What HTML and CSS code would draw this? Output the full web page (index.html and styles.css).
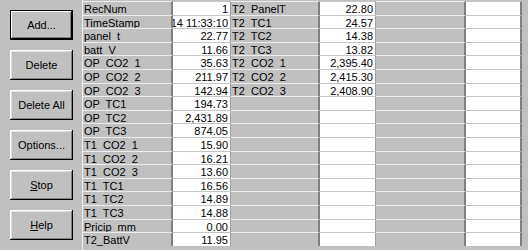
FILE: index.html
```html
<!DOCTYPE html>
<html lang="en">
<head>
    <meta charset="UTF-8">
    <title>Data Table</title>
    <link rel="stylesheet" href="styles.css">
</head>
<body>
    <div class="window">
        <div class="side">
            <button class="btn default">Add...</button>
            <button class="btn">Delete</button>
            <button class="btn">Delete All</button>
            <button class="btn">Options...</button>
            <button class="btn"><u>S</u>top</button>
            <button class="btn"><u>H</u>elp</button>
        </div>

        <div class="grid">
            <div class="row"><div class="cell label">RecNum</div><div class="cell value wide">1</div><div class="cell label">T2  PanelT</div><div class="cell value">22.80</div><div class="cell label"></div><div class="cell value"></div></div>
            <div class="row"><div class="cell label">TimeStamp</div><div class="cell value wide">14 11:33:10</div><div class="cell label">T2  TC1</div><div class="cell value">24.57</div><div class="cell label"></div><div class="cell value"></div></div>
            <div class="row"><div class="cell label">panel  t</div><div class="cell value wide">22.77</div><div class="cell label">T2  TC2</div><div class="cell value">14.38</div><div class="cell label"></div><div class="cell value"></div></div>
            <div class="row"><div class="cell label">batt  V</div><div class="cell value wide">11.66</div><div class="cell label">T2  TC3</div><div class="cell value">13.82</div><div class="cell label"></div><div class="cell value"></div></div>
            <div class="row"><div class="cell label">OP  CO2  1</div><div class="cell value wide">35.63</div><div class="cell label">T2  CO2  1</div><div class="cell value">2,395.40</div><div class="cell label"></div><div class="cell value"></div></div>
            <div class="row"><div class="cell label">OP  CO2  2</div><div class="cell value wide">211.97</div><div class="cell label">T2  CO2  2</div><div class="cell value">2,415.30</div><div class="cell label"></div><div class="cell value"></div></div>
            <div class="row"><div class="cell label">OP  CO2  3</div><div class="cell value wide">142.94</div><div class="cell label">T2  CO2  3</div><div class="cell value">2,408.90</div><div class="cell label"></div><div class="cell value"></div></div>
            <div class="row"><div class="cell label">OP  TC1</div><div class="cell value wide">194.73</div><div class="cell label"></div><div class="cell value"></div><div class="cell label"></div><div class="cell value"></div></div>
            <div class="row"><div class="cell label">OP  TC2</div><div class="cell value wide">2,431.89</div><div class="cell label"></div><div class="cell value"></div><div class="cell label"></div><div class="cell value"></div></div>
            <div class="row"><div class="cell label">OP  TC3</div><div class="cell value wide">874.05</div><div class="cell label"></div><div class="cell value"></div><div class="cell label"></div><div class="cell value"></div></div>
            <div class="row"><div class="cell label">T1  CO2  1</div><div class="cell value wide">15.90</div><div class="cell label"></div><div class="cell value"></div><div class="cell label"></div><div class="cell value"></div></div>
            <div class="row"><div class="cell label">T1  CO2  2</div><div class="cell value wide">16.21</div><div class="cell label"></div><div class="cell value"></div><div class="cell label"></div><div class="cell value"></div></div>
            <div class="row"><div class="cell label">T1  CO2  3</div><div class="cell value wide">13.60</div><div class="cell label"></div><div class="cell value"></div><div class="cell label"></div><div class="cell value"></div></div>
            <div class="row"><div class="cell label">T1  TC1</div><div class="cell value wide">16.56</div><div class="cell label"></div><div class="cell value"></div><div class="cell label"></div><div class="cell value"></div></div>
            <div class="row"><div class="cell label">T1  TC2</div><div class="cell value wide">14.89</div><div class="cell label"></div><div class="cell value"></div><div class="cell label"></div><div class="cell value"></div></div>
            <div class="row"><div class="cell label">T1  TC3</div><div class="cell value wide">14.88</div><div class="cell label"></div><div class="cell value"></div><div class="cell label"></div><div class="cell value"></div></div>
            <div class="row"><div class="cell label">Pricip  mm</div><div class="cell value wide">0.00</div><div class="cell label"></div><div class="cell value"></div><div class="cell label"></div><div class="cell value"></div></div>
            <div class="row"><div class="cell label">T2_BattV</div><div class="cell value wide">11.95</div><div class="cell label"></div><div class="cell value"></div><div class="cell label"></div><div class="cell value"></div></div>
        </div>
    </div>
</body>
</html>
```

FILE: styles.css
```css
body {
    margin: 0;
    padding: 0;
    background: #c0c0c0;
    font-family: 'Liberation Sans', Arial, sans-serif;
    font-size: 11px;
    color: #000;
}

.window {
    display: flex;
    width: 528px;
    height: 250px;
    overflow: hidden;
}

/* button column on the left */
.side {
    width: 82px;
    flex: none;
    display: flex;
    flex-direction: column;
    gap: 10px;
    padding: 10px 0 0 10px;
    box-sizing: border-box;
}

.btn {
    width: 63px;
    height: 30px;
    padding: 0;
    border: none;
    background: #c0c0c0;
    font-family: inherit;
    font-size: 11px;
    color: #000;
    box-shadow: inset -1px -1px #000, inset 1px 1px #fff,
                inset -2px -2px #808080, inset 2px 2px #dfdfdf;
}

.btn.default {
    box-shadow: inset 0 0 0 1px #000,
                inset -2px -2px #000, inset 2px 2px #fff,
                inset -3px -3px #808080;
}

.btn u {
    text-decoration: underline;
}

/* the data grid */
.grid {
    flex: none;
    padding-top: 1px;
    border-left: 1px solid #f0f0f0;
}

.row {
    display: flex;
    height: 13.6px;
}

.cell {
    box-sizing: border-box;
    height: 100%;
    white-space: pre;
    overflow: hidden;
    line-height: 12px;
    padding-top: 1px;
}

.label {
    width: 90px;
    background: #c0c0c0;
    border-top: 1px solid #ececec;
    border-right: 2px solid #808080;
    padding-left: 1px;
}

.value {
    width: 56px;
    background: #fff;
    border-top: 1px solid #c4c4c4;
    border-right: 1px solid #a0a0a0;
    display: flex;
    justify-content: flex-end;
    padding-right: 2px;
}

.value.wide {
    width: 58px;
}

.row .cell:nth-child(3) {
    width: 89px;
}

.row .cell:last-child {
    border-right: 2px solid #808080;
}
```
